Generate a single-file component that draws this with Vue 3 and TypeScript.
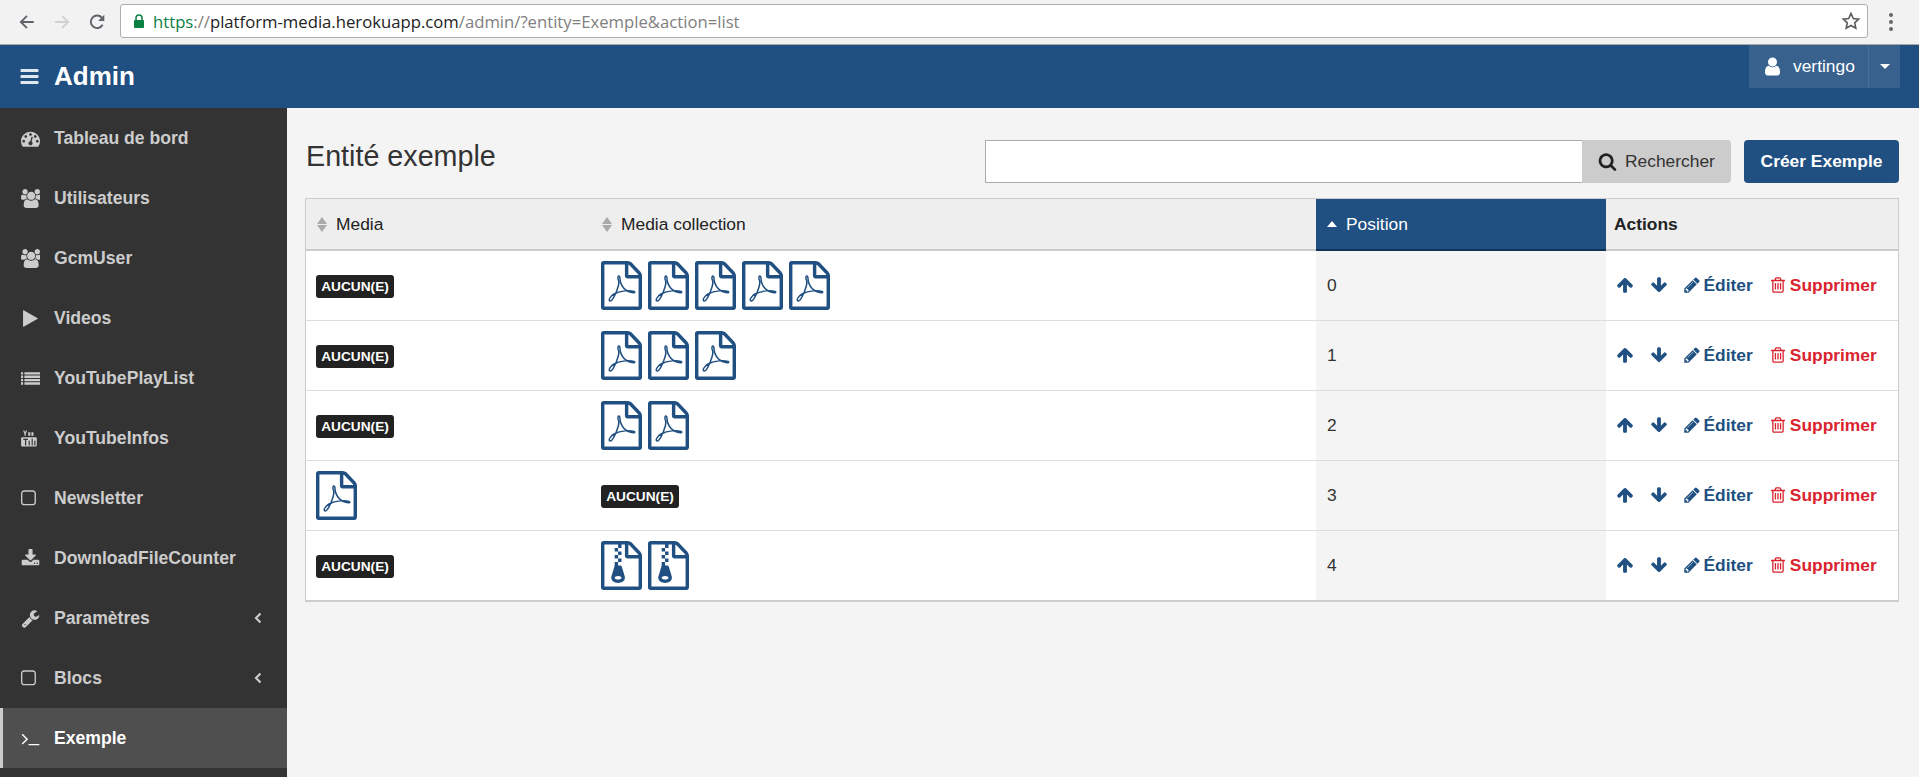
<script setup lang="ts">
type Cell = { kind: 'none' } | { kind: 'pdf' | 'zip'; count: number };

const icons: Record<string, string> = {
  bars: 'M1664 1344v128q0 26-19 45t-45 19h-1408q-26 0-45-19t-19-45v-128q0-26 19-45t45-19h1408q26 0 45 19t19 45zm0-512v128q0 26-19 45t-45 19h-1408q-26 0-45-19t-19-45v-128q0-26 19-45t45-19h1408q26 0 45 19t19 45zm0-512v128q0 26-19 45t-45 19h-1408q-26 0-45-19t-19-45v-128q0-26 19-45t45-19h1408q26 0 45 19t19 45z',
  user: 'M1536 1399q0 109-62.5 187t-150.5 78h-854q-88 0-150.5-78t-62.5-187q0-85 8.5-160.5t31.5-152 58.5-131 94-89 134.5-34.5q131 128 313 128t313-128q76 0 134.5 34.5t94 89 58.5 131 31.5 152 8.5 160.5zm-256-887q0 159-112.5 271.5t-271.5 112.5-271.5-112.5-112.5-271.5 112.5-271.5 271.5-112.5 271.5 112.5 112.5 271.5z',
  search: 'M1216 832q0-185-131.5-316.5t-316.5-131.5-316.5 131.5-131.5 316.5 131.5 316.5 316.5 131.5 316.5-131.5 131.5-316.5zm512 832q0 52-38 90t-90 38q-54 0-90-38l-343-342q-179 124-399 124-143 0-273.5-55.5t-225-150-150-225-55.5-273.5 55.5-273.5 150-225 225-150 273.5-55.5 273.5 55.5 225 150 150 225 55.5 273.5q0 220-124 399l343 343q37 37 37 90z',
  dashboard: 'M384 1152q0-53-37.5-90.5t-90.5-37.5-90.5 37.5-37.5 90.5 37.5 90.5 90.5 37.5 90.5-37.5 37.5-90.5zm192-448q0-53-37.5-90.5t-90.5-37.5-90.5 37.5-37.5 90.5 37.5 90.5 90.5 37.5 90.5-37.5 37.5-90.5zm428 481l101-382q6-26-7.5-48.5t-38.5-29.5-48 6.5-30 39.5l-101 382q-60 5-107 43.5t-63 98.5q-20 77 20 146t117 89 146-20 89-117q16-60-6-117t-72-91zm660-33q0-53-37.5-90.5t-90.5-37.5-90.5 37.5-37.5 90.5 37.5 90.5 90.5 37.5 90.5-37.5 37.5-90.5zm-640-640q0-53-37.5-90.5t-90.5-37.5-90.5 37.5-37.5 90.5 37.5 90.5 90.5 37.5 90.5-37.5 37.5-90.5zm448 192q0-53-37.5-90.5t-90.5-37.5-90.5 37.5-37.5 90.5 37.5 90.5 90.5 37.5 90.5-37.5 37.5-90.5zm320 448q0 261-141 483-19 29-54 29h-1402q-35 0-54-29-141-221-141-483 0-182 71-348t191-286 286-191 348-71 348 71 286 191 191 286 71 348z',
  users: 'M593 896q-162 5-265 128h-134q-82 0-138-40.5t-56-118.5q0-353 124-353 6 0 43.5 21t97.5 42.5 119 21.5q67 0 133-23-5 37-5 66 0 139 81 256zm1071 637q0 120-73 189.5t-194 69.5h-874q-121 0-194-69.5t-73-189.5q0-53 3.5-103.5t14-109 26.5-108.5 43-97.5 62-81 85.5-53.5 111.5-20q10 0 43 21.5t73 48 107 48 135 21.5 135-21.5 107-48 73-48 43-21.5q61 0 111.5 20t85.5 53.5 62 81 43 97.5 26.5 108.5 14 109 3.5 103.5zm-1024-1277q0 106-75 181t-181 75-181-75-75-181 75-181 181-75 181 75 75 181zm704 384q0 159-112.5 271.5t-271.5 112.5-271.5-112.5-112.5-271.5 112.5-271.5 271.5-112.5 271.5 112.5 112.5 271.5zm576 225q0 78-56 118.5t-138 40.5h-134q-103-123-265-128 81-117 81-256 0-29-5-66 66 23 133 23 59 0 119-21.5t97.5-42.5 43.5-21q124 0 124 353zm-128-609q0 106-75 181t-181 75-181-75-75-181 75-181 181-75 181 75 75 181z',
  play: 'M1576 927l-1328 738q-23 13-39.5 3t-16.5-36v-1472q0-26 16.5-36t39.5 3l1328 738q23 13 23 31t-23 31z',
  list: 'M0 300h200v224h-200zM320 300h1472v224h-1472zM0 620h200v224h-200zM320 620h1472v224h-1472zM0 940h200v224h-200zM320 940h1472v224h-1472zM0 1260h200v224h-200zM320 1260h1472v224h-1472z',
  youtube: 'M200 130h120l70 200 70-200h120l-130 320v190h-120v-190zM680 300h200v340h-200zM980 300h200v340h-200zM100 780h1300q90 0 90 100v680q0 100-90 100h-1300q-90 0-90-100v-680q0-100 90-100zM220 920v120h160v520h110v-520h160v-120zM720 1100v460h110v-460zM1000 920v640h110v-640zM1250 1100v460h110v-460z',
  square: 'M1120 256h-832q-66 0-113 47t-47 113v832q0 66 47 113t113 47h832q66 0 113-47t47-113v-832q0-66-47-113t-113-47zm288 160v832q0 119-84.5 203.5t-203.5 84.5h-832q-119 0-203.5-84.5t-84.5-203.5v-832q0-119 84.5-203.5t203.5-84.5h832q119 0 203.5 84.5t84.5 203.5z',
  download: 'M1344 1344q0-26-19-45t-45-19-45 19-19 45 19 45 45 19 45-19 19-45zm256 0q0-26-19-45t-45-19-45 19-19 45 19 45 45 19 45-19 19-45zm128-224v320q0 40-28 68t-68 28h-1472q-40 0-68-28t-28-68v-320q0-40 28-68t68-28h465l135 136q58 56 136 56t136-56l136-136h464q40 0 68 28t28 68zm-325-569q17 41-14 70l-448 448q-18 19-45 19t-45-19l-448-448q-31-29-14-70 17-39 59-39h256v-448q0-26 19-45t45-19h256q26 0 45 19t19 45v448h256q42 0 59 39z',
  wrench: 'M448 1472q0-26-19-45t-45-19-45 19-19 45 19 45 45 19 45-19 19-45zm644-420l-682 682q-37 37-90 37-52 0-91-37l-106-108q-38-36-38-90 0-53 38-91l681-681q39 98 114.5 173.5t173.5 114.5zm634-435q0 39-23 106-47 134-164.5 217.5t-258.5 83.5q-185 0-316.5-131.5t-131.5-316.5 131.5-316.5 316.5-131.5q58 0 121.5 16.5t107.5 46.5q16 11 16 28t-16 28l-293 169v224l193 107q5-3 79-48.5t135.5-81 70.5-35.5q15 0 23.5 10t8.5 25z',
  terminal: 'M649 983l-466 466q-10 10-23 10t-23-10l-50-50q-10-10-10-23t10-23l393-393-393-393q-10-10-10-23t10-23l50-50q10-10 23-10t23 10l466 466q10 10 10 23t-10 23zm1079 457v64q0 14-9 23t-23 9h-960q-14 0-23-9t-9-23v-64q0-14 9-23t23-9h960q14 0 23 9t9 23z',
  up: 'M1675 971q0 51-37 90l-75 75q-38 38-91 38-54 0-90-38l-294-293v704q0 52-37.5 84.5t-90.5 32.5h-128q-53 0-90.5-32.5t-37.5-84.5v-704l-294 293q-36 38-90 38t-90-38l-75-75q-38-38-38-90 0-53 38-91l651-651q35-37 90-37 54 0 91 37l651 651q37 39 37 91z',
  down: 'M1675 832q0 53-37 90l-651 652q-39 37-91 37-53 0-90-37l-651-652q-38-36-38-90 0-53 38-91l74-75q39-37 91-37 53 0 90 37l294 294v-704q0-52 38-90t90-38h128q52 0 90 38t38 90v704l294-294q37-37 90-37 52 0 91 37l75 75q37 39 37 91z',
  pencil: 'M491 1536l91-91-235-235-91 91v107h128v128h107zm523-928q0-22-22-22-10 0-17 7l-542 542q-7 7-7 17 0 22 22 22 10 0 17-7l542-542q7-7 7-17zm-54-192l416 416-832 832h-416v-416zm683 96q0 53-37 90l-166 166-416-416 166-165q36-38 90-38 53 0 91 38l235 234q37 39 37 91z',
  trash: 'M704 736v576q0 14-9 23t-23 9h-64q-14 0-23-9t-9-23v-576q0-14 9-23t23-9h64q14 0 23 9t9 23zm256 0v576q0 14-9 23t-23 9h-64q-14 0-23-9t-9-23v-576q0-14 9-23t23-9h64q14 0 23 9t9 23zm256 0v576q0 14-9 23t-23 9h-64q-14 0-23-9t-9-23v-576q0-14 9-23t23-9h64q14 0 23 9t9 23zm128 724v-948h-896v948q0 22 7 40.5t14.5 27 10.5 8.5h832q3 0 10.5-8.5t14.5-27 7-40.5zm-672-1076h448l-48-117q-7-9-17-11h-317q-10 2-17 11zm928 32v64q0 14-9 23t-23 9h-96v948q0 83-47 143.5t-113 60.5h-832q-66 0-113-58.5t-47-141.5v-952h-96q-14 0-23-9t-9-23v-64q0-14 9-23t23-9h309l70-167q15-37 54-63t79-26h320q40 0 79 26t54 63l70 167h309q14 0 23 9t9 23z',
  pdf: 'M1596 380q28 28 48 76t20 88v1152q0 40-28 68t-68 28h-1344q-40 0-68-28t-28-68v-1600q0-40 28-68t68-28h896q40 0 88 20t76 48zm-444-244v376h376q-10-29-22-41l-313-313q-12-12-41-22zm384 1528v-1024h-416q-40 0-68-28t-28-68v-416h-768v1536h1280z',
  zip: 'M768 384v-128h-128v128h128zm128 128v-128h-128v128h128zm-128 128v-128h-128v128h128zm128 128v-128h-128v128h128zm700-388q28 28 48 76t20 88v1152q0 40-28 68t-68 28h-1344q-40 0-68-28t-28-68v-1600q0-40 28-68t68-28h896q40 0 88 20t76 48zm-444-244v376h376q-10-29-22-41l-313-313q-12-12-41-22zm384 1528v-1024h-416q-40 0-68-28t-28-68v-416h-128v128h-128v-128h-512v1536h1280zm-627-721l107 349q8 27 8 52 0 83-72.5 137.5t-183.5 54.5-183.5-54.5-72.5-137.5q0-25 8-52 21-63 120-396v-128h128v128h79q22 0 39 13t23 34zm-141 465q53 0 90.5-19t37.5-45-37.5-45-90.5-19-90.5 19-37.5 45 37.5 45 90.5 19z',
};

const navItems = [
  { label: 'Tableau de bord', icon: 'dashboard' },
  { label: 'Utilisateurs', icon: 'users' },
  { label: 'GcmUser', icon: 'users' },
  { label: 'Videos', icon: 'play' },
  { label: 'YouTubePlayList', icon: 'list' },
  { label: 'YouTubeInfos', icon: 'youtube' },
  { label: 'Newsletter', icon: 'square' },
  { label: 'DownloadFileCounter', icon: 'download' },
  { label: 'Paramètres', icon: 'wrench', sub: true },
  { label: 'Blocs', icon: 'square', sub: true },
  { label: 'Exemple', icon: 'terminal', active: true },
];

const rows: { media: Cell; collection: Cell; position: number }[] = [
  { media: { kind: 'none' }, collection: { kind: 'pdf', count: 5 }, position: 0 },
  { media: { kind: 'none' }, collection: { kind: 'pdf', count: 3 }, position: 1 },
  { media: { kind: 'none' }, collection: { kind: 'pdf', count: 2 }, position: 2 },
  { media: { kind: 'pdf', count: 1 }, collection: { kind: 'none' }, position: 3 },
  { media: { kind: 'none' }, collection: { kind: 'zip', count: 2 }, position: 4 },
];

const cellsOf = (row: { media: Cell; collection: Cell }) => [row.media, row.collection];
</script>

<template>
  <div class="page">
    <div class="browser">
      <svg class="nav-arrow" viewBox="0 0 16 16"><path d="M14 8H3M8 2.500L2.500 8 8 13.500" fill="none" stroke="#5f6368" stroke-width="1.600" /></svg>
      <svg class="nav-arrow" viewBox="0 0 16 16"><path d="M2 8h11M8 2.500L13.500 8 8 13.500" fill="none" stroke="#d0d0d0" stroke-width="1.600" /></svg>
      <svg class="nav-arrow" viewBox="0 0 16 16"><path d="M13 10.500A5.600 5.600 0 1 1 12.600 4.500" fill="none" stroke="#5f6368" stroke-width="1.700" /><path d="M14.500 1.500v5.500h-5.500z" fill="#5f6368" /></svg>
      <div class="address">
        <svg class="lock" viewBox="0 0 12 14"><path d="M3 6V4a3 3 0 0 1 6 0v2" fill="none" stroke="#0b8043" stroke-width="1.500" /><rect x="1" y="6" width="10" height="8" rx="1" fill="#0b8043" /></svg>
        <span class="url"><span class="scheme">https</span><span class="dim">://</span>platform-media.herokuapp.com<span class="dim">/admin/?entity=Exemple&amp;action=list</span></span>
        <svg class="star" viewBox="0 0 20 20"><path d="M10 2.500l2.300 5 5.400.6-4 3.700 1.100 5.400L10 14.500l-4.800 2.700 1.100-5.400-4-3.700 5.400-.6z" fill="none" stroke="#5a5a5a" stroke-width="1.600" /></svg>
      </div>
      <div class="kebab"><i></i><i></i><i></i></div>
    </div>

    <header class="topbar">
      <svg class="fa brand-icon" viewBox="0 0 1792 1792"><path :d="icons.bars" /></svg>
      <span class="brand">Admin</span>
      <div class="user-menu">
        <div class="user-name">
          <svg class="fa" viewBox="0 0 1792 1792"><path :d="icons.user" /></svg>
          vertingo
        </div>
        <div class="user-caret"></div>
      </div>
    </header>

    <div class="body">
      <aside class="sidebar">
        <a v-for="item in navItems" :key="item.label" class="nav-item" :class="{ active: item.active }">
          <svg class="fa nav-icon" viewBox="0 0 1792 1792"><path :d="icons[item.icon]" fill-rule="evenodd" /></svg>
          <span class="nav-label">{{ item.label }}</span>
          <svg v-if="item.sub" class="chevron" viewBox="0 0 8 12"><path d="M6.500 1.500L2 6l4.500 4.500" fill="none" stroke="#ccc" stroke-width="2.200" /></svg>
        </a>
      </aside>

      <main class="content">
        <div class="title-row">
          <h1>Entité exemple</h1>
          <div class="search">
            <input type="text" aria-label="Rechercher" />
            <button class="search-btn">
              <svg class="fa" viewBox="0 0 1792 1792"><path :d="icons.search" /></svg>
              Rechercher
            </button>
          </div>
          <button class="create-btn">Créer Exemple</button>
        </div>

        <table class="grid">
          <colgroup>
            <col class="col-media" />
            <col class="col-collection" />
            <col class="col-position" />
            <col class="col-actions" />
          </colgroup>
          <thead>
            <tr>
              <th><span class="sort"></span>Media</th>
              <th class="collection-head"><span class="sort"></span>Media collection</th>
              <th class="sorted"><span class="sort-up"></span>Position</th>
              <th class="actions-head">Actions</th>
            </tr>
          </thead>
          <tbody>
            <tr v-for="row in rows" :key="row.position">
              <td v-for="(cell, i) in cellsOf(row)" :key="i">
                <span v-if="cell.kind === 'none'" class="badge">AUCUN(E)</span>
                <div v-else class="files">
                  <svg v-for="n in cell.count" :key="n" class="file" viewBox="0 0 41 49">
                    <path :d="icons[cell.kind]" transform="translate(-3.417 0) scale(.02669 .02734)" />
                    <path
                      v-if="cell.kind === 'pdf'"
                      class="acrobat"
                      d="M17 18C16.500 14 19 14 19 18C19 22 22 29 29 31C33 32.500 35 31.500 33 30.500C29 29 20 29.500 13 33C9 35.500 7 39.500 9 40C11 40.500 15 33 17 26C18 23 18 20 17 18Z"
                    />
                  </svg>
                </div>
              </td>
              <td class="pos-cell">{{ row.position }}</td>
              <td class="actions">
                <svg class="fa act" viewBox="0 0 1792 1792"><path :d="icons.up" /></svg>
                <svg class="fa act act-down" viewBox="0 0 1792 1792"><path :d="icons.down" /></svg>
                <a class="edit"><svg class="fa" viewBox="0 0 1792 1792"><path :d="icons.pencil" /></svg>Éditer</a>
                <a class="delete"><svg class="fa" viewBox="0 0 1792 1792"><path :d="icons.trash" /></svg>Supprimer</a>
              </td>
            </tr>
          </tbody>
        </table>
      </main>
    </div>
  </div>
</template>

<style>
html, body { margin: 0; background: #f4f4f4; }
</style>

<style scoped>
.page {
  height: 777px;
  overflow: hidden;
  display: flex;
  flex-direction: column;
  font-family: "Liberation Sans", Arial, sans-serif;
  font-size: 17.4px;
  color: #222;
}

.fa { fill: currentColor; flex: none; }

/* browser toolbar */
.browser {
  height: 45px;
  box-sizing: border-box;
  flex: none;
  display: flex;
  align-items: center;
  padding-left: 18px;
  background: #f2f2f2;
  border-bottom: 1px solid #a8a8a8;
}
.nav-arrow { width: 18px; height: 18px; margin-right: 17px; flex: none; }
.nav-arrow:nth-child(3) { margin-right: 14px; }
.address {
  width: 1748px;
  height: 34px;
  box-sizing: border-box;
  margin-top: -2px;
  display: flex;
  align-items: center;
  padding-left: 12px;
  background: #fff;
  border: 1px solid #aeaeae;
  border-radius: 3px;
}
.lock { width: 12px; height: 14px; margin-right: 8px; }
.url {
  flex: 1;
  font-family: "Open Sans", "Noto Sans", sans-serif;
  font-size: 16.7px;
  color: #222;
}
.scheme { color: #0b8043; }
.dim { color: #808080; }
.star { width: 20px; height: 20px; margin-right: 6px; }
.kebab {
  margin-left: 21px;
  display: flex;
  flex-direction: column;
  gap: 3px;
}
.kebab i { width: 4px; height: 4px; border-radius: 50%; background: #666; }

/* top bar */
.topbar {
  height: 63px;
  flex: none;
  display: flex;
  align-items: center;
  padding: 0 19px;
  background: #205081;
  color: #fff;
}
.brand-icon { width: 21px; height: 21px; margin-right: 14px; color: #dfe6ee; }
.brand { font-size: 26px; font-weight: 700; }
.user-menu {
  margin-left: auto;
  align-self: flex-start;
  height: 43px;
  display: flex;
  background: #38628d;
}
.user-name {
  width: 120px;
  box-sizing: border-box;
  display: flex;
  align-items: center;
  gap: 10px;
  padding-left: 13px;
  border-right: 1px solid #4a7098;
}
.user-name svg { width: 21px; height: 21px; }
.user-caret { width: 31px; position: relative; }
.user-caret::after {
  content: "";
  position: absolute;
  left: 11px;
  top: 19px;
  border: 5px solid transparent;
  border-top-color: #fff;
  border-bottom: 0;
}

.body { flex: 1; display: flex; min-height: 0; }

/* sidebar */
.sidebar { width: 287px; flex: none; background: #333; font-size: 17.6px; }
.nav-item {
  height: 60px;
  box-sizing: border-box;
  display: flex;
  align-items: center;
  padding: 0 25px 0 21px;
  color: #ccc;
  font-weight: 700;
}
.nav-item.active {
  padding-left: 18px;
  border-left: 3px solid #ccc;
  background: #4f4f4f;
  color: #fff;
}
.nav-icon { width: 19px; height: 19px; margin-right: 14px; }
.nav-label { flex: 1; }
.chevron { width: 8px; height: 12px; }

/* content */
.content { flex: 1; min-width: 0; padding: 32px 20px 0 18px; }
.title-row { display: flex; align-items: center; margin-bottom: 15px; }
h1 {
  margin: 0 0 10px 1px;
  font-size: 28.7px;
  font-weight: 400;
  color: #333;
}
.search { margin-left: auto; display: flex; height: 43px; }
.search input {
  width: 597px;
  box-sizing: border-box;
  border: 1px solid #aaa;
  border-right: 0;
  background: #fff;
  outline: none;
}
.search-btn {
  width: 149px;
  display: flex;
  align-items: center;
  gap: 8px;
  padding: 0 0 0 16px;
  border: 0;
  border-radius: 0 4px 4px 0;
  background: #ccc;
  font: inherit;
  color: #333;
}
.search-btn svg { width: 19px; height: 19px; color: #222; }
.create-btn {
  width: 155px;
  height: 43px;
  margin-left: 13px;
  padding: 0;
  border: 0;
  border-radius: 4px;
  background: #205081;
  color: #fff;
  font: inherit;
  font-weight: 700;
}

/* table */
.grid {
  width: 1594px;
  table-layout: fixed;
  border-collapse: separate;
  border-spacing: 0;
  border: 1px solid #ccc;
  border-bottom-width: 2px;
  background: #fff;
}
.col-media { width: 286px; }
.col-collection { width: 724px; }
.col-position { width: 290px; }
.col-actions { width: 292px; }
th {
  height: 52px;
  box-sizing: border-box;
  padding: 1px 0 0 11px;
  background: #eee;
  border-bottom: 2px solid #ccc;
  text-align: left;
  font-weight: 400;
  white-space: nowrap;
}
th.collection-head { padding-left: 10px; }
th.sorted {
  background: #205081;
  color: #fff;
  border-bottom-color: #0f3359;
}
th.actions-head { padding-left: 8px; font-weight: 700; }
.sort {
  display: inline-block;
  position: relative;
  width: 11px;
  height: 15px;
  margin-right: 8px;
  vertical-align: -2px;
}
.sort::before, .sort::after {
  content: "";
  position: absolute;
  left: 0;
  border: 5.500px solid transparent;
}
.sort::before { top: 0; border-top: 0; border-bottom: 7px solid #aaa; }
.sort::after { bottom: 0; border-bottom: 0; border-top: 7px solid #aaa; }
.sort-up {
  display: inline-block;
  margin-right: 9px;
  vertical-align: 3px;
  border: 5.500px solid transparent;
  border-top: 0;
  border-bottom: 6px solid #fff;
}
td {
  height: 70px;
  box-sizing: border-box;
  padding: 0 0 0 10px;
  border-bottom: 1px solid #ddd;
  vertical-align: middle;
  color: #333;
}
td:nth-child(2) { padding-left: 9px; }
tbody tr:last-child td { border-bottom: 0; height: 69px; }
.pos-cell { padding-left: 11px; background: #f4f4f4; }
.badge {
  display: block;
  width: 78px;
  height: 23px;
  margin-top: 1px;
  line-height: 23px;
  border-radius: 3px;
  background: #222;
  color: #fff;
  text-align: center;
  font-size: 13.7px;
  font-weight: 700;
}
.files { display: flex; gap: 6px; }
.file { width: 41px; height: 49px; fill: #205081; flex: none; }
.acrobat { fill: none; stroke: #205081; stroke-width: 1.5; stroke-linejoin: round; }
.actions {
  padding-left: 9.500px;
  white-space: nowrap;
  color: #205081;
  font-weight: 700;
}
.actions svg { width: 18px; height: 18px; vertical-align: -3px; }
.act { margin-right: 16px; }
.act-down { margin-right: 15px; }
.edit svg { margin-right: 3px; }
.delete { margin-left: 16px; color: #d9232e; }
.delete svg { margin-right: 3px; }
</style>
